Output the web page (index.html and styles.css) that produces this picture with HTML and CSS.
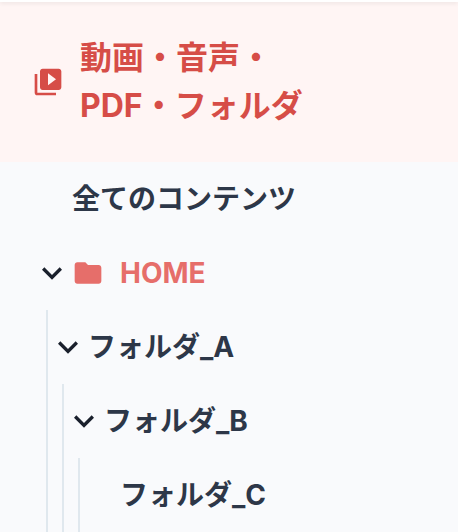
FILE: index.html
```html
<!DOCTYPE html>
<html lang="ja">
<head>
  <meta charset="UTF-8">
  <title>コンテンツ</title>
  <link rel="stylesheet" href="styles.css">
</head>
<body>
  <header class="topbar"></header>
  <nav class="sidebar">
    <a class="section-link" href="#">
      <svg class="icon" viewBox="0 0 24 24" aria-hidden="true">
        <path d="M4 6H2v14c0 1.1.9 2 2 2h14v-2H4V6zm16-4H8c-1.1 0-2 .9-2 2v12c0 1.1.9 2 2 2h12c1.1 0 2-.9 2-2V4c0-1.1-.9-2-2-2zm-8 12.500v-9l6 4.500-6 4.500z"/>
      </svg>
      <span>動画・音声・<br>PDF・フォルダ</span>
    </a>
    <ul class="tree">
      <li>
        <div class="row row-plain"><a href="#">全てのコンテンツ</a></div>
      </li>
      <li>
        <div class="row">
          <button class="toggle" type="button" aria-label="HOMEを閉じる" aria-expanded="true">
            <svg viewBox="0 0 24 24"><path d="M16.59 8.59 12 13.17 7.41 8.59 6 10l6 6 6-6z"/></svg>
          </button>
          <a class="current" href="#">
            <svg class="icon" viewBox="0 0 24 24" aria-hidden="true">
              <path d="M10 4H4c-1.1 0-2 .9-2 2v12c0 1.1.9 2 2 2h16c1.1 0 2-.9 2-2V8c0-1.1-.9-2-2-2h-8l-2-2z"/>
            </svg>
            <span>HOME</span>
          </a>
        </div>
        <ul class="branch">
          <li>
            <div class="row">
              <button class="toggle" type="button" aria-label="フォルダ_Aを閉じる" aria-expanded="true">
                <svg viewBox="0 0 24 24"><path d="M16.59 8.59 12 13.17 7.41 8.59 6 10l6 6 6-6z"/></svg>
              </button>
              <a href="#">フォルダ_A</a>
            </div>
            <ul class="branch">
              <li>
                <div class="row">
                  <button class="toggle" type="button" aria-label="フォルダ_Bを閉じる" aria-expanded="true">
                    <svg viewBox="0 0 24 24"><path d="M16.59 8.59 12 13.17 7.41 8.59 6 10l6 6 6-6z"/></svg>
                  </button>
                  <a href="#">フォルダ_B</a>
                </div>
                <ul class="branch">
                  <li>
                    <div class="row row-plain"><a href="#">フォルダ_C</a></div>
                  </li>
                </ul>
              </li>
            </ul>
          </li>
        </ul>
      </li>
    </ul>
  </nav>
</body>
</html>
```

FILE: styles.css
```css
body {
  margin: 0;
  background: #f9fafc;
  color: #2d3748;
  font-family: Inter, "Noto Sans CJK JP", sans-serif;
  font-weight: 700;
}

a {
  color: inherit;
  text-decoration: none;
}

ul {
  margin: 0;
  padding: 0;
  list-style: none;
}

.topbar {
  position: relative;
  height: 2px;
  background: #fff;
  box-shadow: 0 1px 4px rgba(0, 0, 0, 0.12);
}

.icon {
  flex: none;
  width: 32px;
  height: 32px;
  fill: currentColor;
}

.section-link {
  display: flex;
  align-items: center;
  gap: 16px;
  padding: 32px;
  background: #fff5f4;
  color: #d64d47;
  font-size: 32px;
  line-height: 48px;
}

/* folder tree */
.tree {
  padding-left: 32px;
  font-size: 28px;
  line-height: 42px;
}

.row {
  display: flex;
  align-items: center;
  padding: 16px 0;
}

.row-plain {
  padding-left: 40px;
}

.current {
  display: flex;
  align-items: center;
  gap: 16px;
  color: #e66e6a;
}

.toggle {
  flex: none;
  width: 40px;
  height: 40px;
  padding: 0;
  border: 0;
  background: none;
  color: #1a202c;
  cursor: pointer;
}

.toggle svg {
  display: block;
  fill: currentColor;
}

.branch {
  margin-left: 14px;
  border-left: 2px solid #e0e8ee;
}
```
